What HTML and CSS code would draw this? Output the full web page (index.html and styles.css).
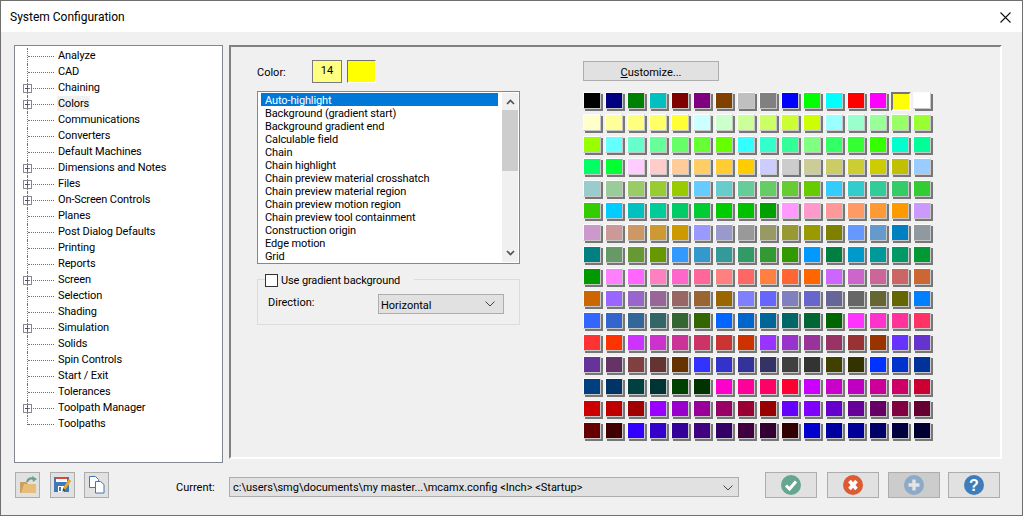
FILE: index.html
```html
<!DOCTYPE html>
<html lang="en">
<head>
    <meta charset="UTF-8">
    <title>System Configuration</title>
    <link rel="stylesheet" href="styles.css">
</head>
<body>
    <div class="dialog">
        <div class="titlebar">
            <span class="title">System Configuration</span>
            <svg class="close-icon" width="11" height="11" viewBox="0 0 11 11"><path d="M0.5 0.5L10.5 10.5M10.5 0.5L0.5 10.5" stroke="#111" stroke-width="1.1" fill="none"/></svg>
        </div>
        <div class="main">
            <ul class="tree">
                <li>Analyze</li>
                <li>CAD</li>
                <li class="has-kids">Chaining</li>
                <li class="has-kids"><span class="hovered">Colors</span></li>
                <li>Communications</li>
                <li>Converters</li>
                <li>Default Machines</li>
                <li class="has-kids">Dimensions and Notes</li>
                <li class="has-kids">Files</li>
                <li class="has-kids">On-Screen Controls</li>
                <li>Planes</li>
                <li>Post Dialog Defaults</li>
                <li>Printing</li>
                <li>Reports</li>
                <li class="has-kids">Screen</li>
                <li>Selection</li>
                <li>Shading</li>
                <li class="has-kids">Simulation</li>
                <li>Solids</li>
                <li>Spin Controls</li>
                <li>Start / Exit</li>
                <li>Tolerances</li>
                <li class="has-kids">Toolpath Manager</li>
                <li class="last">Toolpaths</li>
            </ul>
            <div class="panel">
                <div class="left-col">
                    <div class="color-row">
                        <span class="color-label">Color:</span>
                        <div class="color-input">14</div>
                        <div class="color-preview"></div>
                    </div>
                    <div class="listbox">
                        <ul class="list-items">
                            <li class="selected">Auto-highlight</li>
                            <li>Background (gradient start)</li>
                            <li>Background gradient end</li>
                            <li>Calculable field</li>
                            <li>Chain</li>
                            <li>Chain highlight</li>
                            <li>Chain preview material crosshatch</li>
                            <li>Chain preview material region</li>
                            <li>Chain preview motion region</li>
                            <li>Chain preview tool containment</li>
                            <li>Construction origin</li>
                            <li>Edge motion</li>
                            <li>Grid</li>
                        </ul>
                        <div class="scrollbar">
                            <svg class="arrow" width="9" height="6" viewBox="0 0 9 6"><path d="M1 5L4.5 1.5L8 5" stroke="#505050" stroke-width="1.6" fill="none"/></svg>
                            <div class="thumb"></div>
                            <svg class="arrow arrow-down" width="9" height="6" viewBox="0 0 9 6"><path d="M1 1L4.5 4.5L8 1" stroke="#505050" stroke-width="1.6" fill="none"/></svg>
                        </div>
                    </div>
                    <div class="gradient-group">
                        <div class="group-legend">
                            <span class="checkbox"></span>
                            <span>Use gradient background</span>
                        </div>
                        <div class="direction-row">
                            <span class="direction-label">Direction:</span>
                            <div class="select">
                                <span>Horizontal</span>
                                <svg width="10" height="6" viewBox="0 0 10 6"><path d="M0.5 0.5L5 5L9.5 0.5" stroke="#444" stroke-width="1" fill="none"/></svg>
                            </div>
                        </div>
                    </div>
                </div>
                <div class="right-col">
                    <button class="customize"><u>C</u>ustomize...</button>
                    <div class="palette" id="palette"></div>
                </div>
            </div>
        </div>
        <div class="footer">
            <button class="icon-btn">
                <svg width="20" height="18" viewBox="0 0 20 18">
                    <path d="M2 6h6l2 2h8v9H2z" fill="#e8bd78"/>
                    <path d="M2 6h6l2 2H6L3 17H2z" fill="#c9a063"/>
                    <path d="M9 6C10 2.500 13 1.500 16 3" stroke="#6c9f8d" stroke-width="2.200" fill="none"/>
                    <path d="M14 0l5 3-4 3z" fill="#6c9f8d"/>
                </svg>
            </button>
            <button class="icon-btn">
                <svg width="20" height="20" viewBox="0 0 20 20">
                    <path d="M1 2h15v15H1z" fill="#3f78b5"/>
                    <path d="M3 2h11v5H3z" fill="#fff"/>
                    <path d="M3 2h11v2H3z" fill="#d8483a"/>
                    <path d="M5 11h6v6H5z" fill="#fff"/>
                    <path d="M6 12h2v4H6z" fill="#3f78b5"/>
                    <path d="M17 5L11 14" stroke="#e8a92c" stroke-width="3" fill="none"/>
                    <path d="M9.500 17l0.500-4 2.500 2z" fill="#444"/>
                </svg>
            </button>
            <button class="icon-btn">
                <svg width="18" height="20" viewBox="0 0 18 20">
                    <path d="M1.500 1.500h6l3 3v8h-9z" fill="#fff" stroke="#3f78b5"/>
                    <path d="M7.500 6.500h5l3.500 3v8.500h-8.500z" fill="#fff" stroke="#3f78b5"/>
                </svg>
            </button>
            <span class="current-label">Current:</span>
            <div class="current-combo">
                <span>c:\users\smg\documents\my master...\mcamx.config &lt;Inch&gt; &lt;Startup&gt;</span>
                <svg width="10" height="6" viewBox="0 0 10 6"><path d="M0.5 0.5L5 5L9.5 0.5" stroke="#444" stroke-width="1" fill="none"/></svg>
            </div>
            <div class="actions">
                <button class="action-btn ok-btn">
                    <svg width="20" height="20" viewBox="0 0 20 20"><circle cx="10" cy="10" r="10" fill="#66a690"/><path d="M5 10.500L8.500 14L15 6.500" stroke="#fff" stroke-width="3" fill="none"/></svg>
                </button>
                <button class="action-btn cancel-btn">
                    <svg width="20" height="20" viewBox="0 0 20 20"><circle cx="10" cy="10" r="10" fill="#dd5a34"/><path d="M6.500 6L13.500 14M13.500 6L6.500 14" stroke="#fff" stroke-width="3.600" fill="none"/></svg>
                </button>
                <button class="action-btn disabled">
                    <svg width="20" height="20" viewBox="0 0 20 20"><circle cx="10" cy="10" r="10" fill="#8caac9"/><path d="M10 4.500V15.500M4.500 10H15.500" stroke="#e4e4e4" stroke-width="3.400" fill="none"/></svg>
                </button>
                <button class="action-btn">
                    <svg width="20" height="20" viewBox="0 0 20 20"><circle cx="10" cy="10" r="10" fill="#3f7cba"/><text x="10" y="15.500" text-anchor="middle" class="help-mark">?</text></svg>
                </button>
            </div>
        </div>
    </div>
    <script src="app.js"></script>
</body>
</html>
```

FILE: styles.css
```css
* {
    box-sizing: border-box;
}
html, body {
    margin: 0;
    padding: 0;
}
body {
    font-family: Roboto, "Open Sans", sans-serif;
    font-size: 11px;
    color: #000;
    background: #f0f0f0;
    overflow: hidden;
}
ul {
    list-style: none;
    margin: 0;
    padding: 0;
}
button {
    font: inherit;
    color: inherit;
    padding: 0;
}
.dialog {
    width: 1023px;
    height: 516px;
    border: 1px solid #6f6f6f;
    display: flex;
    flex-direction: column;
    background: #f0f0f0;
}
.titlebar {
    height: 31px;
    flex: none;
    background: #fff;
    display: flex;
    align-items: center;
    justify-content: space-between;
    padding: 1px 11px 0 9px;
}
.title {
    font-size: 12px;
}
.main {
    display: flex;
    align-items: flex-start;
    padding: 13px 0 0 13px;
}
.tree {
    width: 209px;
    height: 418px;
    background: #fff;
    border: 1px solid #828790;
    padding-top: 2px;
    flex: none;
    letter-spacing: -0.12px;
}
.tree li {
    position: relative;
    height: 16px;
    line-height: 15px;
    padding-left: 43px;
    white-space: nowrap;
}
/* dotted connectors */
.tree li::before {
    content: "";
    position: absolute;
    left: 12px;
    top: 0;
    bottom: 0;
    border-left: 1px dotted #707070;
}
.tree li::after {
    content: "";
    position: absolute;
    left: 13px;
    top: 8px;
    width: 26px;
    border-top: 1px dotted #707070;
}
.tree li.last::before {
    bottom: 7px;
}
.tree li.has-kids {
    background-image: linear-gradient(#3a4a8c, #3a4a8c), linear-gradient(#3a4a8c, #3a4a8c), linear-gradient(#fff, #fff), linear-gradient(#8a8a8a, #8a8a8a);
    background-repeat: no-repeat;
    background-size: 5px 1px, 1px 5px, 7px 7px, 9px 9px;
    background-position: 10px 8px, 12px 6px, 9px 5px, 8px 4px;
}
.hovered {
    display: inline-block;
    background: #f0f0f0;
    padding: 0 1px;
    margin-left: -1px;
}
.panel {
    width: 773px;
    height: 414px;
    margin-left: 6px;
    border: 2px solid #fff;
    border-top-color: #808080;
    border-left-color: #808080;
    padding: 13px 0 0 26px;
    display: flex;
    gap: 63px;
}
.left-col {
    width: 263px;
    flex: none;
}
.color-row {
    display: flex;
    height: 23px;
}
.color-label {
    width: 55px;
    padding-top: 6px;
}
.color-input {
    width: 30px;
    height: 23px;
    background: #ffff80;
    border: 1px solid #7a7a7a;
    text-align: center;
    line-height: 19px;
}
.color-preview {
    width: 29px;
    height: 23px;
    margin-left: 5px;
    background: #ff0;
    border: 1px solid #fff;
    border-top-color: #707070;
    border-left-color: #707070;
}
.listbox {
    display: flex;
    height: 173px;
    margin-top: 8px;
    background: #fff;
    border: 1px solid #828790;
    padding: 1px 1px 1px 3px;
}
.list-items {
    flex: 1;
    letter-spacing: -0.12px;
}
.list-items li {
    height: 13px;
    line-height: 15px;
    padding-left: 4px;
    white-space: nowrap;
}
.list-items .selected {
    background: #0078d7;
    color: #fff;
}
.scrollbar {
    width: 16px;
    margin: 0 0 0 4px;
    background: #f0f0f0;
    display: flex;
    flex-direction: column;
    align-items: center;
}
.arrow {
    margin-top: 6px;
    flex: none;
}
.arrow-down {
    margin-top: auto;
    margin-bottom: 6px;
}
.thumb {
    width: 100%;
    height: 61px;
    margin-top: 5px;
    background: #cdcdcd;
}
.gradient-group {
    position: relative;
    height: 46px;
    margin-top: 15px;
    border: 1px solid #dcdcdc;
}
/* legend sits over the group border */
.group-legend {
    position: absolute;
    left: 7px;
    top: -7px;
    height: 14px;
    display: flex;
    align-items: center;
    gap: 3px;
    padding-right: 14px;
    background: #f0f0f0;
    letter-spacing: -0.12px;
}
.checkbox {
    width: 13px;
    height: 13px;
    background: #fff;
    border: 1px solid #333;
}
.direction-row {
    display: flex;
    align-items: flex-start;
    padding: 14px 15px 0 10px;
}
.direction-label {
    width: 110px;
    line-height: 17px;
}
.select {
    width: 126px;
    height: 20px;
    background: #e1e1e1;
    border: 1px solid #adadad;
    display: flex;
    align-items: center;
    justify-content: space-between;
    padding: 2px 8px 0 2px;
}
.select svg {
    margin-top: -2px;
}
.right-col {
    width: 352px;
}
.customize {
    display: block;
    width: 136px;
    height: 20px;
    margin-top: 1px;
    padding-top: 2px;
    background: #e1e1e1;
    border: 1px solid #adadad;
}
.palette {
    display: grid;
    grid-template-columns: repeat(16, 22px);
    grid-auto-rows: 22px;
    margin-top: 11px;
}
.swatch {
    width: 18px;
    height: 17px;
    border-style: solid;
    border-width: 1px;
    border-color: #fcfcfc #c8c8c8 #c8c8c8 #fcfcfc;
    box-shadow: 2px 2px 0 #777;
}
.swatch.current {
    width: 20px;
    height: 19px;
    border-width: 2px;
    border-color: #777 #fcfcfc #fcfcfc #777;
    box-shadow: none;
}
.footer {
    display: flex;
    align-items: flex-start;
    margin-top: 9px;
    padding-left: 14px;
}
.icon-btn {
    width: 25px;
    height: 26px;
    margin-right: 10px;
    background: #e1e1e1;
    border: 1px solid #adadad;
    display: flex;
    align-items: center;
    justify-content: center;
}
.icon-btn:nth-child(2) {
    margin-right: 9px;
}
.current-label {
    margin-left: 57px;
    width: 53px;
    padding-top: 9px;
}
.current-combo {
    width: 510px;
    height: 20px;
    margin-top: 5px;
    background: #e1e1e1;
    border: 1px solid #adadad;
    display: flex;
    align-items: center;
    justify-content: space-between;
    padding: 1px 5px 0 3px;
}
.actions {
    display: flex;
    gap: 8px;
    margin-left: 26px;
}
.action-btn {
    width: 52px;
    height: 26px;
    background: #e1e1e1;
    border: 1px solid #adadad;
    display: flex;
    align-items: center;
    justify-content: center;
}
.action-btn.disabled {
    background: #cccccc;
}
.ok-btn {
    margin-right: 2px;
}
.cancel-btn {
    margin-right: 1px;
}
.help-mark {
    font-family: "Liberation Sans", sans-serif;
    font-weight: bold;
    font-size: 16px;
    fill: #fff;
}
```

FILE: app.js
```js
const colors = [
    '000000','000080','008000','00C0C0','800000','800080','804000','C0C0C0','808080','0000FF','00FF00','00FFFF','FF0000','FF00FF','FFFF00','FFFFFF',
    'FFFFCC','FFFF99','FFFF80','FFFF66','FFFF33','CCFFFF','CCFFCC','CCFF99','CCFF66','CCFF33','CCFF00','99FFFF','99FFCC','99FF99','99FF66','99FF33',
    '99FF00','66FFFF','66FFCC','66FF99','66FF66','66FF33','66FF00','33FFFF','33FFCC','33FF99','80FF80','33FF66','33FF33','33FF00','00FFCC','00FF99',
    '00FF66','00FF33','FFCCFF','FFCCCC','FFCC99','FFCC66','FFCC33','FFCC00','CCCCFF','CCCCCC','CCCC99','CCCC66','CCCC33','CCCC00','C0C000','99CCFF',
    '99CCCC','99CC99','99CC66','99CC33','99CC00','66CCFF','66CCCC','66CC99','66CC66','66CC33','66CC00','33CCFF','33CCCC','33CC99','33CC66','33CC33',
    '33CC00','00CCFF','00C0C0','00CC99','00CC66','00CC33','00CC00','00C000','00A000','FF99FF','FF99CC','FF9999','FF9966','FF9933','FF9900','CC99FF',
    'CC99CC','CC9999','CC9966','CC9933','CC9900','9999FF','9999CC','999999','999966','999933','999900','808000','6699FF','6699CC','0080C0','9099A0',
    '008080','669966','669933','669900','3399FF','3399CC','339999','339966','339933','339900','0099FF','008040','0099CC','009999','009966','009933',
    '009900','FF80FF','FF66FF','FF80C0','FF66CC','FF6699','FF8080','FF6666','FF8040','FF6633','FF6600','CC66FF','CC66CC','CC6699','CC6666','CC6633',
    'CC6600','9966FF','9966CC','996699','996666','996633','996600','8080FF','6666FF','8080C0','6666CC','666699','666666','666633','666600','0080FF',
    '3366FF','3366CC','336699','336666','336633','336600','0066FF','0066CC','006699','006666','006633','006600','FF33FF','FF33CC','FF3399','FF3366',
    'FF3333','FF3300','CC33FF','CC33CC','CC3399','CC3366','CC3333','CC3300','9933FF','9933CC','993399','993366','993333','993300','6633FF','6633CC',
    '663399','663366','804040','663333','663300','3333FF','3333CC','333399','333366','404040','333333','404000','333300','0033FF','0033CC','003399',
    '004080','003366','004040','003333','004000','003300','FF00CC','FF0099','FF0066','FF0033','CC00FF','CC00CC','C000C0','CC0099','CC0066','CC0033',
    'CC0000','C00000','A00000','9900FF','9900CC','990099','990066','990033','990000','6600FF','8000FF','6600CC','660099','660066','800040','660033',
    '660000','400000','3300FF','3300CC','330099','400080','330066','400040','330033','330000','0000CC','0000A0','000099','000066','000040','000033'
];

const palette = document.getElementById('palette');
colors.forEach((color, i) => {
    const swatch = document.createElement('div');
    swatch.className = i === 14 ? 'swatch current' : 'swatch';
    swatch.style.background = '#' + color;
    palette.appendChild(swatch);
});
```
